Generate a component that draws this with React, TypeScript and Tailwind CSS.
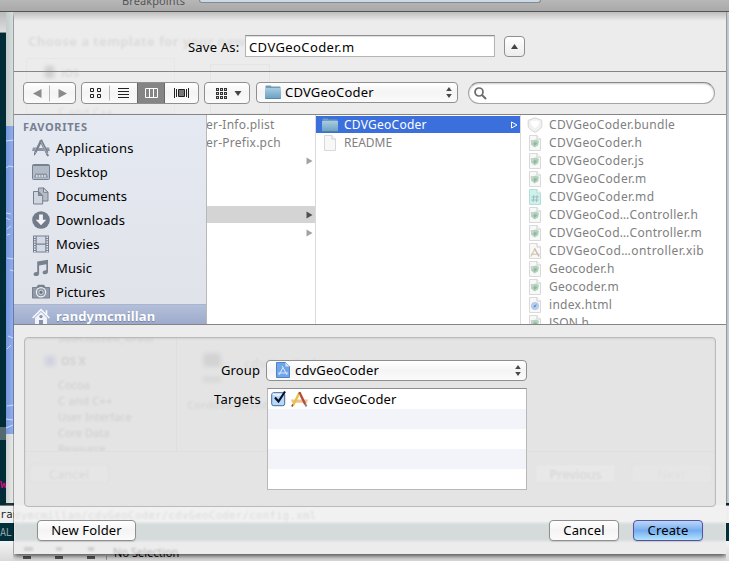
import type { ReactNode } from "react";

type IconName = "apps" | "desktop" | "documents" | "downloads" | "movies" | "music" | "pictures" | "home";

function SideIcon({ name }: { name: IconName }) {
  const c = "#78818f";
  const common = { width: 18, height: 18, viewBox: "0 0 18 18", fill: "none", className: "block shrink-0" };
  switch (name) {
    case "apps":
      return (
        <svg {...common}>
          <path d="M1 8.400h3.200L2.500 12H0zM14 8.400h3l1 3.600h-2.500zM6.500 9h4.500l1.400 3H5z" fill="#8c95a3" />
          <path d="M9.200 1.500 3.300 13.500" stroke={c} strokeWidth="2.400" />
          <path d="M2 13l2.300 1.200L2 17z" fill={c} />
          <path d="M8.600 1 15.200 14" stroke={c} strokeWidth="2.800" />
          <path d="M14.500 14.500 16.300 17" stroke={c} strokeWidth="2" />
          <path d="M9 2.600 14.600 13.500" stroke="#b9c0cb" strokeWidth=".7" />
        </svg>
      );
    case "desktop":
      return (
        <svg {...common}>
          <rect x=".5" y="1.500" width="17" height="15" rx="1" fill="#b2bac8" stroke={c} />
          <path d="M1 2.500h16" stroke={c} />
          <path d="M3.500 10.500h11l1.500 4H2z" fill="#8c95a4" />
          <path d="M4 13h10" stroke="#eef1f6" strokeWidth="1.600" strokeDasharray="1.700 1" />
        </svg>
      );
    case "documents":
      return (
        <svg {...common}>
          <path d="M6.500 1h5l4.500 4v9H6.500z" fill="#b4bcc9" stroke={c} />
          <path d="M11.500 1v4.300H16z" fill="#dfe3ea" stroke={c} />
          <path d="M1.500 4.500h5l4.200 4v8.500H1.500z" fill="#d0d6e0" stroke={c} />
          <path d="M6.500 4.500v4h4z" fill="#8a93a1" stroke={c} />
        </svg>
      );
    case "downloads":
      return (
        <svg {...common}>
          <circle cx="9" cy="9" r="8.800" fill="#727b89" />
          <path d="M7.100 3.600h3.800v5.200h3.400L9 14.300 3.700 8.800h3.400z" fill="#f2f4f8" />
        </svg>
      );
    case "movies":
      return (
        <svg {...common}>
          <path d="M1 .5h16v17H1z" fill={c} />
          <path d="M4.700 1.600h8.600v6.800H4.700zM4.700 9.700h8.600v6.700H4.700z" fill="#d3d9e5" />
          <path d="M2.800 1.500v16M15.200 1.500v16" stroke="#e6eaf2" strokeWidth="1.500" strokeDasharray="1.400 1" />
        </svg>
      );
    case "music":
      return (
        <svg {...common}>
          <path d="M5.200 2.600 16 .8v12c0 1.500-1.200 2.500-2.800 2.500s-2.600-.7-2.600-1.900c0-1.500 1.600-2.500 3.700-2.200V5.200l-7.200 1.200v8.400c0 1.400-1.300 2.300-2.900 2.300-1.500 0-2.600-.7-2.600-1.900 0-1.500 1.600-2.400 3.600-2.100z" fill={c} />
        </svg>
      );
    case "pictures":
      return (
        <svg {...common}>
          <path d="M1 4h3.500L6 1.800h6L13.500 4H17c.6 0 1 .4 1 1v9.500c0 .6-.4 1-1 1H1c-.6 0-1-.4-1-1V5c0-.6.4-1 1-1z" fill={c} />
          <path d="M1 5h16v9.500H1z" fill="#9099a7" />
          <circle cx="9" cy="9.300" r="4.600" fill="#8b94a3" stroke="#eef1f6" strokeWidth="1.200" />
          <circle cx="9" cy="9.300" r="2.200" fill="#6c7583" stroke="#d5dae4" strokeWidth="1" />
        </svg>
      );
    default:
      return (
        <svg {...common}>
          <path d="M.6 10 9 1.600 17.400 10M14.500 6.500V2.200" stroke="#f6f8fc" strokeWidth="1.700" />
          <path d="M3 9.800 9 4l6 5.800V18H3z" fill="#f2f4fa" />
          <circle cx="9" cy="8.600" r="1.700" fill="#8493b5" />
          <path d="M7 12h4v6H7z" fill="#8493b5" />
        </svg>
      );
  }
}

function FolderIcon({ className = "" }: { className?: string }) {
  return (
    <svg width="16" height="14" viewBox="0 0 16 14" className={"block shrink-0 " + className}>
      <defs>
        <linearGradient id="folder" x1="0" y1="0" x2="0" y2="1">
          <stop offset="0" stopColor="#a4cae0" />
          <stop offset="1" stopColor="#6b9fc2" />
        </linearGradient>
      </defs>
      <path d="M.5 13V1.200C.5.700.8.500 1.200.500h4.300c.5 0 .7.400.9 1h8.400c.4 0 .7.200.7.700V13z" fill="#719dba" />
      <path d="M0 3.500h16V13c0 .5-.3.800-.8.800H.8c-.5 0-.8-.3-.8-.8z" fill="url(#folder)" />
      <path d="M0 3.600h16" stroke="#b8d8e8" strokeWidth=".7" />
      <path d="M.3 13.500h15.400" stroke="#4d7c9c" strokeWidth=".8" />
    </svg>
  );
}

type FileKind = "bundle" | "src" | "md" | "xib" | "html" | "blank";

function FileIcon({ kind }: { kind: FileKind }) {
  if (kind === "bundle")
    return (
      <svg width="16" height="16" viewBox="0 0 16 16" className="block shrink-0">
        <path d="M8 .8 14.800 3.300v6C14.300 12 10.500 14 8 15.300 5.500 14 1.700 12 1.200 9.300v-6z" fill="#f1f1f1" stroke="#d6d6d6" />
        <path d="M8 4.200c2-1.500 4.300-.5 4 2-.3 2-2.500 3.500-4 5-1.500-1.500-3.700-3-4-5-.3-2.500 2-3.500 4-2z" fill="#fff" />
      </svg>
    );
  return (
    <svg width="16" height="16" viewBox="0 0 16 16" fill="none" className="block shrink-0">
      <path d="M2.500 .5h7.500l3.500 3.500v11.500h-11z" fill={kind === "md" ? "#c9f4ee" : "#f8f8f8"} stroke={kind === "md" ? "#b8ddd8" : "#d9d9d9"} />
      <path d="M10 .5V4h3.500" fill="#fff" stroke="#cdcdcd" />
      {kind === "src" && (
        <>
          <path d="M4 5.500 9.500 4.500 12 6l-1 4.500-3.500 2L4 9.500z" fill="#b3d2bc" />
          <path d="m5.500 6.500 5 1.500-3 3z" fill="#8eb99d" />
          <path d="M4 5.500 6.500 8" stroke="#cfcfd4" strokeWidth="2" />
        </>
      )}
      {kind === "md" && <path d="M6.800 6 6 13M10.200 6l-.8 7M4.500 8h7.300M4.200 11h7.300" stroke="#a5bab7" />}
      {kind === "xib" && (
        <>
          <path d="m4 13.500 4-8" stroke="#dfcf8c" strokeWidth="1.300" />
          <path d="m7.500 5.500 4.500 8" stroke="#cbb0a8" strokeWidth="1.300" />
          <path d="M4 11.200h8.500" stroke="#c3c3c3" />
        </>
      )}
      {kind === "html" && (
        <>
          <circle cx="8" cy="9" r="3.700" fill="#b7cfee" stroke="#a8bddb" strokeWidth=".6" />
          <path d="m6.300 10.800.9-2.500 2.500-1-.9 2.500z" fill="#6c93cf" />
        </>
      )}
    </svg>
  );
}

function Stepper({ className = "" }: { className?: string }) {
  return (
    <svg width="6" height="11" viewBox="0 0 6 11" className={"block " + className}>
      <path d="M3 0 5.800 4H.2zM3 11 .2 7h5.600z" fill="#484848" />
    </svg>
  );
}

function Button({ children, className }: { children: ReactNode; className: string }) {
  return (
    <div className={"flex h-[21px] items-center justify-center rounded-[4px] border pb-px text-black shadow-[0_1px_1px_rgba(0,0,0,0.12)] " + className}>
      {children}
    </div>
  );
}

const PLAIN = "border-[#8f8f8f] bg-linear-to-b from-white via-[#f4f4f4] to-[#fbfbfb]";

const places: [IconName, string, string][] = [
  ["apps", "Applications", "tracking-[0.25px]"],
  ["desktop", "Desktop", "tracking-[0.2px]"],
  ["documents", "Documents", "tracking-[0.1px]"],
  ["downloads", "Downloads", "tracking-[0.1px]"],
  ["movies", "Movies", "tracking-[0.1px]"],
  ["music", "Music", "tracking-[0.1px]"],
  ["pictures", "Pictures", "tracking-[0.05px]"],
];

const files: [FileKind, string, string][] = [
  ["bundle", "CDVGeoCoder.bundle", "tracking-[0.3px]"],
  ["src", "CDVGeoCoder.h", "tracking-[0.35px]"],
  ["src", "CDVGeoCoder.js", "tracking-[0.35px]"],
  ["src", "CDVGeoCoder.m", "tracking-[0.4px]"],
  ["md", "CDVGeoCoder.md", "tracking-[0.4px]"],
  ["src", "CDVGeoCod…Controller.h", "tracking-[0.28px]"],
  ["src", "CDVGeoCod…Controller.m", "tracking-[0.28px]"],
  ["xib", "CDVGeoCod…ontroller.xib", "tracking-[0.45px]"],
  ["src", "Geocoder.h", "tracking-[0.2px]"],
  ["src", "Geocoder.m", "tracking-[0.25px]"],
  ["html", "index.html", "tracking-[0.3px]"],
  ["src", "JSON.h", "tracking-[0.2px]"],
];

function RowArrow({ color }: { color: string }) {
  return (
    <svg width="7" height="8" viewBox="0 0 7 8" className="mr-[2px] ml-auto block">
      <path d="M.5.5 6.500 4l-6 3.500z" fill={color} />
    </svg>
  );
}

/* The windows lying behind the save sheet. */
function Desktop() {
  return (
    <div className="flex h-full flex-col">
      <div className="flex h-[12px] shrink-0 overflow-hidden border-b border-[#555] bg-linear-to-b from-[#b7b7b7] to-[#a9a9a9]">
        <div className="ml-[122px] w-[77px] -translate-y-[6px] text-[11px] leading-[13px] tracking-[0.1px] whitespace-nowrap text-[#555]">Breakpoints</div>
        <div className="h-[3px] w-[342px] rounded-b-[3px] border border-t-0 border-[#888] bg-[#cbd8e8]" />
      </div>
      <div className="flex h-[493px] shrink-0 justify-between">
        <div className="flex">
          <div className="w-[6px] overflow-hidden">
            <div className="h-[21px] border-b border-[#888] bg-linear-to-b from-[#bbb] to-[#ddd]" />
            <div className="h-[394px] bg-[#002c38]" />
            <div className="h-[13px] bg-[#54696f]" />
            <div className="h-[65px] bg-[#002c38] pt-[36px] font-['Liberation_Mono'] text-[12px] leading-[18px] font-bold text-[#d0107a]">w</div>
          </div>
          <div className="w-[9px]">
            <div className="h-[114px] bg-linear-to-r from-[#c3cccb] to-[#dce3e2]" />
            <svg width="9" height="308" className="block bg-linear-to-r from-[#7597dd] to-[#9ab3ee]">
              <path d="M0 15l8-1M0 42l3-2 5 1M0 87l5 1M0 92l4 2M1 103l4-3M1 109l3-1M1 132l7 1M4 144l4 1M2 210l5 2M1 223l4-4M1 280l7-1M0 293l7 1M0 302l7-3" stroke="#cddbff" fill="none" />
            </svg>
            <div className="h-[69px] bg-linear-to-r from-[#ced0d0] to-[#eeefef]" />
            <div className="h-[2px] bg-[#123741]" />
          </div>
        </div>
        <div className="w-[3px] bg-linear-to-r from-[#7d8b89] via-[#bcc6c6] via-50% to-[#cbd3d3]">
          <div className="mt-[491px] h-[2px] bg-[#002c38]" />
        </div>
      </div>
      <div className="flex h-[18px] justify-between border-t border-[#777] bg-[#eee] font-['DejaVu_Sans_Mono'] text-[10.5px] leading-[17px] text-[#222]">ran</div>
      <div className="h-[18px] bg-[#00303c] font-['DejaVu_Sans_Mono'] text-[10px] leading-[20px] tracking-[-0.2px] text-[#93a1a1]">AL</div>
      <div className="flex h-[20px] items-start bg-linear-to-b from-[#f4f4f4] to-[#d9d9d9] pt-[15px] pl-[23px]">
        <div className="h-[3px] w-[8px] bg-[#555]" />
        <div className="ml-[24px] h-[3px] w-[8px] bg-[#555]" />
        <div className="ml-[24px] h-[3px] w-[8px] bg-[#555]" />
        <div className="ml-[11px] h-[4px] w-px bg-[#999]" />
        <div className="-mt-[10px] ml-[7px] text-[11px] leading-[14px] tracking-[0.05px] text-black">No Selection</div>
      </div>
    </div>
  );
}

/* Blurred remains of the template chooser that show through the translucent sheet. */
function GhostText({ children, className }: { children: ReactNode; className: string }) {
  return <div className={"absolute leading-[16px] whitespace-nowrap blur-[1px] " + className}>{children}</div>;
}

export default function App() {
  return (
    <div className="relative h-[561px] w-[729px] overflow-hidden font-['Noto_Sans','Open_Sans',sans-serif] text-[13px] leading-[18px] text-black">
      <Desktop />
      <div className="absolute top-[12px] left-[14px] flex h-[542px] w-[712px] flex-col bg-[#ececec] shadow-[0_2px_5px_rgba(0,0,0,0.7)] [clip-path:inset(0_0_-20px_-1px)]">
        <div className="pointer-events-none absolute inset-0 overflow-hidden">
          <div className="absolute inset-x-0 top-[493px] h-[17px] bg-[#f1f1f1]" />
          <div className="absolute inset-x-0 top-[511px] h-[18px] bg-[#d5dbdb] blur-[1px]" />
          <GhostText className="top-[21px] left-[14px] text-[13px] font-bold tracking-[0.35px] text-black/7">Choose a template for your new</GhostText>
          <GhostText className="top-[53px] left-[47px] text-[11px] font-bold text-black/8">iOS</GhostText>
          <div className="absolute top-[54px] left-[31px] h-[12px] w-[9px] bg-black/12 blur-[2px]" />
          <GhostText className="top-[92px] left-[44px] text-[11px] tracking-[0.4px] text-black/8">C and C++</GhostText>
          <div className="absolute top-[46px] left-[12px] h-[56px] w-[149px] border border-black/2" />
          <div className="absolute top-[52px] left-[196px] h-[50px] w-[60px] border border-black/3" />
          <GhostText className="top-[495px] left-0 font-['DejaVu_Sans_Mono'] text-[10.5px] tracking-[0.4px] text-black/10">dymcmillan/cdvGeoCoder/cdvGeoCoder/config.xml</GhostText>
          <GhostText className="top-[532px] left-[99px] text-[11px] tracking-[0.05px] text-black/25">No Selection</GhostText>
          <div className="absolute top-[535px] left-[10px] h-[4px] w-[9px] bg-black/12 blur-[1px]" />
          <div className="absolute top-[535px] left-[42px] h-[4px] w-[6px] bg-black/12 blur-[1px]" />
          <div className="absolute top-[535px] left-[74px] h-[4px] w-[6px] bg-black/12 blur-[1px]" />
        </div>

        <div className="relative flex h-[60px] shrink-0 items-start border-b border-[#858585] bg-linear-to-b from-black/20 via-transparent via-15% to-transparent pt-[23px]">
          <div className="ml-[174px] w-[57px] leading-[24px] tracking-[0.2px] whitespace-nowrap">Save As:</div>
          <div className="h-[22px] w-[250px] border border-[#b4b4b4] border-t-[#8e8e8e] bg-white pl-[3px] leading-[22px] tracking-[0.4px] shadow-[inset_0_1px_1px_#ddd]">CDVGeoCoder.m</div>
          <div className="mt-[1px] ml-[9px] flex h-[21px] w-[21px] items-center justify-center rounded-[4px] border border-[#8f8f8f] bg-linear-to-b from-white to-[#ededed]">
            <svg width="7" height="5"><path d="M3.500 0 7 5H0z" fill="#444" /></svg>
          </div>
        </div>

        <div className="relative flex h-[43px] shrink-0 items-start border-b border-[#858585] pt-[10px] pl-[9px]">
          <div className={"flex h-[22px] w-[53px] items-center rounded-[4px] border " + PLAIN}>
            <svg width="51" height="20">
              <path d="M17.500 6v9L9 10.500zM34.500 6v9l8.500-4.500z" fill="#8b8b8b" />
              <path d="M25.500 2.500v16" stroke="#b8b8b8" />
            </svg>
          </div>
          <div className={"ml-[5px] flex h-[22px] w-[118px] overflow-hidden rounded-[4px] border " + PLAIN}>
            <svg width="116" height="20" fill="none" stroke="#222">
              <path d="M55 0h28v20H55z" fill="#858585" stroke="none" />
              <path d="M55.500 0v20M82.500 0v20" stroke="#686868" />
              <path d="M8.500 5.500h3v3h-3zM15.500 5.500h3v3h-3zM8.500 11.500h3v3h-3zM15.500 11.500h3v3h-3z" />
              <path d="M27.500 2.500v15" stroke="#b8b8b8" />
              <path d="M36 5.500h11M36 8.500h11M36 11.500h11M36 14.500h11" />
              <path d="M63.500 5.500h12v9h-12zM67.500 5.500v9M71.500 5.500v9" stroke="#fff" />
              <path d="M92.500 5v10M94.500 6v8M104.500 6v8M106.500 5v10" />
              <path d="M96.500 6.500h6v7h-6z" fill="#777" />
            </svg>
          </div>
          <div className={"ml-[5px] flex h-[22px] w-[46px] rounded-[4px] border " + PLAIN}>
            <svg width="44" height="20" fill="none" stroke="#333">
              <path d="M11 6.500h11M11 10.500h11M11 14.500h11" strokeWidth="3" strokeDasharray="3 1" />
              <path d="M12 6.500h9M12 10.500h9M12 14.500h9" stroke="#ccc" strokeDasharray="1 3" />
              <path d="M29.500 8h7L33 13z" fill="#444" stroke="none" />
            </svg>
          </div>
          <div className={"ml-[6px] flex h-[21px] w-[202px] items-center rounded-[4px] border pb-px pl-[8px] " + PLAIN}>
            <FolderIcon />
            <span className="ml-[4px] tracking-[0.2px]">CDVGeoCoder</span>
            <Stepper className="mr-[5px] ml-auto" />
          </div>
          <div className="ml-[10px] h-[22px] w-[247px] rounded-full border border-[#a5a5a5] border-t-[#888] bg-white pt-[3px] pl-[4px] shadow-[inset_0_1px_2px_#ccc]">
            <svg width="14" height="14" fill="none" stroke="#6b6b6b" strokeWidth="1.700">
              <circle cx="6" cy="6" r="4" />
              <path d="m9 9 4 4" strokeWidth="2" />
            </svg>
          </div>
        </div>

        <div className="relative flex h-[210px] shrink-0 border-b border-[#858585] bg-white">
          <div className="flex w-[193px] flex-col overflow-hidden border-r border-[#b8b8b8] bg-linear-to-b from-[#e5e9f1] to-[#dfe2e9]">
            <div className="h-[21px] shrink-0 pl-[9px] text-[11px] leading-[24px] font-bold tracking-[0.65px] text-[#758092]">FAVORITES</div>
            {places.map(([icon, label, tracking]) => (
              <div key={label} className="flex h-[24px] shrink-0 items-center pl-[18px]">
                <SideIcon name={icon} />
                <span className={"ml-[6px] " + tracking}>{label}</span>
              </div>
            ))}
            <div className="flex h-[24px] shrink-0 items-center border-t border-[#a9b4d0] bg-linear-to-b from-[#b4bfd9] to-[#98a6c9] pl-[18px] font-bold text-white">
              <SideIcon name="home" />
              <span className="-mt-px ml-[6px] tracking-[0.15px] [text-shadow:0_1px_1px_#7080a0]">randymcmillan</span>
            </div>
          </div>
          <div className="w-[109px] overflow-hidden border-r border-[#dadada] pt-px text-[12px] tracking-[0.25px] text-[#808080]">
            <div className="flex h-[18px] whitespace-nowrap"><span className="-ml-px">er-Info.plist</span></div>
            <div className="flex h-[18px] whitespace-nowrap"><span className="-ml-px">er-Prefix.pch</span></div>
            <div className="flex h-[18px] items-center"><RowArrow color="#a2a2a2" /></div>
            <div className="mt-[36px] flex h-[17px] items-center bg-[#d4d4d4]"><RowArrow color="#505050" /></div>
            <div className="mt-px flex h-[18px] items-center"><RowArrow color="#a2a2a2" /></div>
          </div>
          <div className="w-[205px] border-r border-[#dadada] pt-px text-[12px] tracking-[0.25px] text-[#808080]">
            <div className="mb-px flex h-[17px] items-center bg-[#3b70dc] pl-[6px] text-white">
              <FolderIcon />
              <span className="ml-[6px]">CDVGeoCoder</span>
              <svg width="7" height="8" className="mr-[2px] ml-auto block"><path d="M.5 1v6L6 4z" fill="none" stroke="#fff" /></svg>
            </div>
            <div className="flex h-[17px] items-center pl-[6px]">
              <FileIcon kind="blank" />
              <span className="ml-[6px] tracking-normal">README</span>
            </div>
          </div>
          <div className="w-[205px] overflow-hidden pt-px text-[12px] whitespace-nowrap text-[#808080]">
            {files.map(([kind, name, tracking]) => (
              <div key={name} className="mb-px flex h-[17px] items-center pl-[6px]">
                <FileIcon kind={kind} />
                <span className={"ml-[6px] " + tracking}>{name}</span>
              </div>
            ))}
          </div>
        </div>

        <div className="relative mx-[10px] mt-[12px] h-[170px] shrink-0 rounded-[4px] border border-[#bababa] bg-[#e4e4e4] shadow-[inset_0_1px_2px_rgba(0,0,0,0.08)]">
          <div className="pointer-events-none absolute inset-0 overflow-hidden">
            <GhostText className="-top-[8px] left-[33px] text-[11px] font-bold text-black/6">SubClassed_Gradi</GhostText>
            <GhostText className="top-[15px] left-[36px] text-[11px] font-bold text-black/9">OS X</GhostText>
            <div className="absolute top-[18px] left-[20px] h-[10px] w-[10px] bg-[#5a70c0]/15 blur-[2px]" />
            <GhostText className="top-[39px] left-[33px] text-[11px] text-black/10">Cocoa</GhostText>
            <GhostText className="top-[55px] left-[33px] text-[11px] tracking-[0.3px] text-black/10">C and C++</GhostText>
            <GhostText className="top-[71px] left-[33px] text-[11px] text-black/10">User Interface</GhostText>
            <GhostText className="top-[87px] left-[33px] text-[11px] text-black/10">Core Data</GhostText>
            <div className="absolute top-[103px] left-0 h-[10px] w-[150px] overflow-hidden">
              <GhostText className="top-0 left-[33px] text-[11px] text-black/10">Resource</GhostText>
            </div>
            <div className="absolute top-[-1px] left-[151px] h-[114px] w-px bg-black/2" />
            <div className="absolute inset-x-0 top-[113px] h-px bg-black/2" />
            <div className="absolute top-[15px] left-[178px] h-[14px] w-[18px] rounded bg-black/7 blur-[2px]" />
            <div className="absolute top-[39px] left-[178px] h-[5px] w-[18px] bg-black/6 blur-[2px]" />
            <GhostText className="top-[17px] left-[219px] text-[13px] font-bold text-black/4">cdvGeoCoder</GhostText>
            <GhostText className="top-[59px] left-[162px] text-[11px] font-bold text-black/5">Cordova-based</GhostText>
            <div className="absolute top-[126px] left-[4px] flex h-[19px] w-[80px] items-center justify-center rounded border border-black/3 bg-white/10 text-black/8 blur-[1px]">Cancel</div>
            <div className="absolute top-[126px] left-[510px] flex h-[19px] w-[81px] items-center justify-center rounded border border-black/2 bg-white/15 text-black/9 blur-[1px]">Previous</div>
            <div className="absolute top-[126px] left-[606px] flex h-[19px] w-[81px] items-center justify-center rounded border border-black/2 bg-white/10 text-black/4 blur-[1px]">Next</div>
          </div>
          <div className="relative flex pt-[22px]">
            <div className="-mt-px w-[235px] text-right leading-[22px] tracking-[0.1px]">Group</div>
            <div className={"ml-[6px] flex h-[21px] w-[261px] items-center rounded-[4px] border pb-px pl-[9px] " + PLAIN}>
              <svg width="14" height="16" viewBox="0 0 14 16" fill="none">
                <path d="M.5.5h9l4 4v11H.5z" fill="#70a5e8" stroke="#4e83c7" />
                <path d="M9.500.5v4h4z" fill="#d5e6fb" />
                <path d="m3 13 4-7.500 4 7.500M2 11h10M7 5.500 6 4" stroke="#d8e9ff" />
              </svg>
              <span className="ml-[5px] tracking-[0.15px]">cdvGeoCoder</span>
              <Stepper className="mr-[5px] ml-auto" />
            </div>
          </div>
          <div className="relative flex pt-[7px]">
            <div className="w-[236px] text-right leading-[22px] tracking-[0.3px]">Targets</div>
            <div className="ml-[6px] h-[102px] w-[260px] border border-[#b8b8b8] border-t-[#8d8d8d] bg-white">
              <div className="flex h-[20px] items-center pl-[3px]">
                <svg width="16" height="18" viewBox="0 0 16 18" fill="none">
                  <rect x=".7" y="2.700" width="13" height="13" rx="2" fill="#b7d9f7" stroke="#44659b" />
                  <path d="M1.500 4.500q6 3 11.500 0v-1h-11.500z" fill="#e4f2fd" />
                  <path d="m4 7.500 3.500 4L14 1.500" stroke="#081226" strokeWidth="2.200" />
                </svg>
                <svg width="17" height="16" viewBox="0 0 17 16" fill="none" className="ml-[4px]">
                  <path d="M0 8.500h17l-1 3.300H1z" fill="#eec196" />
                  <path d="m8.500 1.500 5.800 12" stroke="#b94b35" strokeWidth="2.400" />
                  <path d="m14 12.500 1.500 3" stroke="#888" strokeWidth="2" />
                  <path d="M7.800 3 2.200 14" stroke="#e8c33a" strokeWidth="2.300" />
                  <path d="M8.800 1 8 3M2 13.500.8 15.500" stroke="#995434" strokeWidth="1.700" />
                </svg>
                <span className="ml-[5px] tracking-[0.1px]">cdvGeoCoder</span>
              </div>
              <div className="h-[20px] bg-[#f2f4fa]" />
              <div className="h-[20px]" />
              <div className="h-[20px] bg-[#f2f4fa]" />
            </div>
          </div>
        </div>

        <div className="relative mt-[13px] flex pl-[23px]">
          <Button className={"w-[99px] tracking-[0.15px] " + PLAIN}>New Folder</Button>
          <Button className={"ml-[413px] w-[70px] tracking-[0.15px] " + PLAIN}>Cancel</Button>
          <Button className="ml-[14px] w-[70px] border-[#5352a4] bg-linear-to-b from-[#bdd6f6] via-[#75adf0] to-[#b2e3fc] tracking-[0.15px]">Create</Button>
        </div>
      </div>
    </div>
  );
}
